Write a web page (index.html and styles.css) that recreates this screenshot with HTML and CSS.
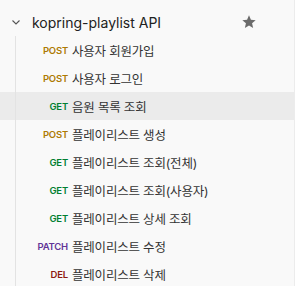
FILE: index.html
```html
<!DOCTYPE html>
<html lang="ko">
<head>
  <meta charset="UTF-8">
  <meta name="viewport" content="width=device-width, initial-scale=1.0">
  <title>kopring-playlist API</title>
  <link rel="stylesheet" href="styles.css">
</head>
<body>
  <div class="sidebar">
    <div class="collection-header">
      <svg class="chevron" width="8" height="5" viewBox="0 0 8 5">
        <path d="M0.5 0.5 L4 4 L7.5 0.5" fill="none" stroke="#555" stroke-width="1.1"/>
      </svg>
      <span class="collection-name">kopring-playlist API</span>
      <svg class="star" width="16" height="16" viewBox="0 0 24 24">
        <path d="M12 2 L14.9 8.6 L22 9.3 L16.6 14 L18.2 21 L12 17.3 L5.8 21 L7.4 14 L2 9.3 L9.1 8.6 Z" fill="#6b6b6b"/>
      </svg>
    </div>

    <ul class="request-list">
      <li><span class="method post">POST</span><span class="request-name">사용자 회원가입</span></li>
      <li><span class="method post">POST</span><span class="request-name">사용자 로그인</span></li>
      <li class="active"><span class="method get">GET</span><span class="request-name">음원 목록 조회</span></li>
      <li><span class="method post">POST</span><span class="request-name">플레이리스트 생성</span></li>
      <li><span class="method get">GET</span><span class="request-name">플레이리스트 조회(전체)</span></li>
      <li><span class="method get">GET</span><span class="request-name">플레이리스트 조회(사용자)</span></li>
      <li><span class="method get">GET</span><span class="request-name">플레이리스트 상세 조회</span></li>
      <li><span class="method patch">PATCH</span><span class="request-name">플레이리스트 수정</span></li>
      <li><span class="method del">DEL</span><span class="request-name">플레이리스트 삭제</span></li>
    </ul>
  </div>
</body>
</html>
```

FILE: styles.css
```css
body {
  margin: 0;
  background-color: #f9f9f9;
  font-family: Inter, "Noto Sans CJK KR", sans-serif;
  color: #212121;
}
.sidebar {
  height: 286px;
  overflow: hidden;
  padding-top: 8px;
  border-right: 1px solid #ececec;
  box-sizing: border-box;
}
.collection-header {
  display: flex;
  align-items: center;
  height: 28px;
  padding-left: 12px;
  padding-right: 37px;
}
.chevron {
  margin-right: 12px;
}
.collection-name {
  flex: 1;
  font-size: 14px;
  color: #212121;
}
.request-list {
  list-style: none;
  margin: 0;
  padding: 0;
  position: relative;
}
.request-list::before {
  content: "";
  position: absolute;
  left: 15px;
  top: 0;
  bottom: -40px;
  width: 1px;
  background-color: #e3e3e3;
}
.request-list li {
  display: flex;
  align-items: center;
  height: 28px;
}
.request-list li.active {
  background-color: #ebebeb;
}
.method {
  width: 72px;
  padding-right: 4px;
  box-sizing: border-box;
  text-align: right;
  font-size: 9.5px;
  font-weight: 600;
  letter-spacing: -0.2px;
}
.method.post { color: #ad7a03; }
.method.get { color: #007f31; }
.method.patch { color: #623497; }
.method.del { color: #8e1a10; }
.request-name {
  font-size: 12.5px;
  letter-spacing: -0.2px;
  color: #333;
}
```
